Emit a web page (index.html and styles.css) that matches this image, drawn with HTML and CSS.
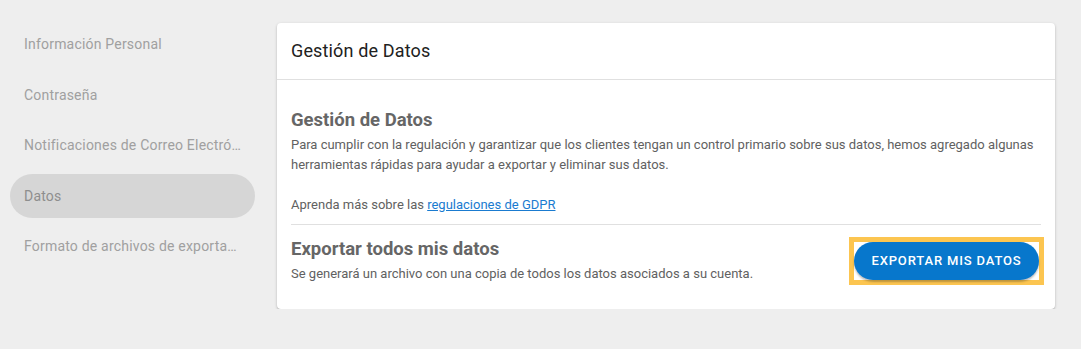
FILE: index.html
```html
<!DOCTYPE html>
<html lang="es">
<head>
<meta charset="utf-8">
<title>Gestión de Datos</title>
<link rel="stylesheet" href="styles.css">
</head>
<body>
<div class="page">
  <nav class="sidebar">
    <div class="nav-item">Información Personal</div>
    <div class="nav-item">Contraseña</div>
    <div class="nav-item">Notificaciones de Correo Electrónico</div>
    <div class="nav-item active">Datos</div>
    <div class="nav-item">Formato de archivos de exportación</div>
  </nav>
  <main class="card">
    <header class="card-header">Gestión de Datos</header>
    <section class="card-body">
      <h2 class="section-title">Gestión de Datos</h2>
      <p class="text">Para cumplir con la regulación y garantizar que los clientes tengan un control primario sobre sus datos, hemos agregado algunas herramientas rápidas para ayudar a exportar y eliminar sus datos.</p>
      <p class="text learn">Aprenda más sobre las <a href="#" class="link">regulaciones de GDPR</a></p>
      <div class="divider"></div>
      <div class="export-row">
        <div class="export-info">
          <h2 class="section-title">Exportar todos mis datos</h2>
          <p class="text">Se generará un archivo con una copia de todos los datos asociados a su cuenta.</p>
        </div>
        <div class="btn-focus">
          <button class="btn">Exportar mis datos</button>
        </div>
      </div>
    </section>
  </main>
</div>
</body>
</html>
```

FILE: styles.css
```css
html, body {
  margin: 0;
  padding: 0;
  background: #eeeeee;
  font-family: Roboto, "Liberation Sans", Arial, sans-serif;
}

.page {
  display: flex;
  align-items: flex-start;
}

.sidebar {
  width: 245px;
  margin-left: 10px;
  padding-top: 22px;
  display: flex;
  flex-direction: column;
  gap: 6.5px;
}

.nav-item {
  height: 44px;
  line-height: 44px;
  padding: 0 11px 0 14px;
  font-size: 14px;
  letter-spacing: 0.2px;
  color: #a0a0a0;
  white-space: nowrap;
  overflow: hidden;
  text-overflow: ellipsis;
  border-radius: 22px;
}

.nav-item.active {
  background: #d6d6d6;
  color: #8e8e8e;
}

.card {
  margin-left: 22px;
  margin-top: 23px;
  width: 778px;
  background: #ffffff;
  border-radius: 4px;
  box-shadow: 0 1px 3px rgba(0, 0, 0, 0.22), 0 1px 1px rgba(0, 0, 0, 0.1);
}

.card-header {
  height: 56px;
  line-height: 56px;
  padding: 0 14px;
  font-size: 18px;
  letter-spacing: 0.15px;
  color: #212121;
  border-bottom: 1px solid #e0e0e0;
}

.card-body {
  padding: 28px 14px 25px;
}

.section-title {
  margin: 0 0 3px;
  font-size: 18.5px;
  line-height: 24px;
  font-weight: 700;
  color: #666666;
}

.text {
  margin: 0;
  font-size: 13px;
  line-height: 20px;
  color: #616161;
}

.learn {
  margin-top: 20px;
}

.link {
  color: #1a7bd0;
  text-decoration: underline;
}

.divider {
  height: 1px;
  background: #e0e0e0;
  margin: 9px 0 12px;
}

.export-row {
  display: flex;
  align-items: center;
  justify-content: space-between;
}

.btn-focus {
  display: flex;
  border: 5px solid #fcc550;
  background: #ffffff;
  margin: -5px -3px -5px 0;
}

.btn {
  height: 38px;
  width: 185px;
  padding: 0;
  border: none;
  border-radius: 19px;
  background: #0777cc;
  color: #ffffff;
  font-family: Roboto, "Liberation Sans", Arial, sans-serif;
  font-size: 13px;
  font-weight: 500;
  letter-spacing: 0.85px;
  text-transform: uppercase;
  box-shadow: 0 2px 2px rgba(0, 0, 0, 0.25);
}
```
